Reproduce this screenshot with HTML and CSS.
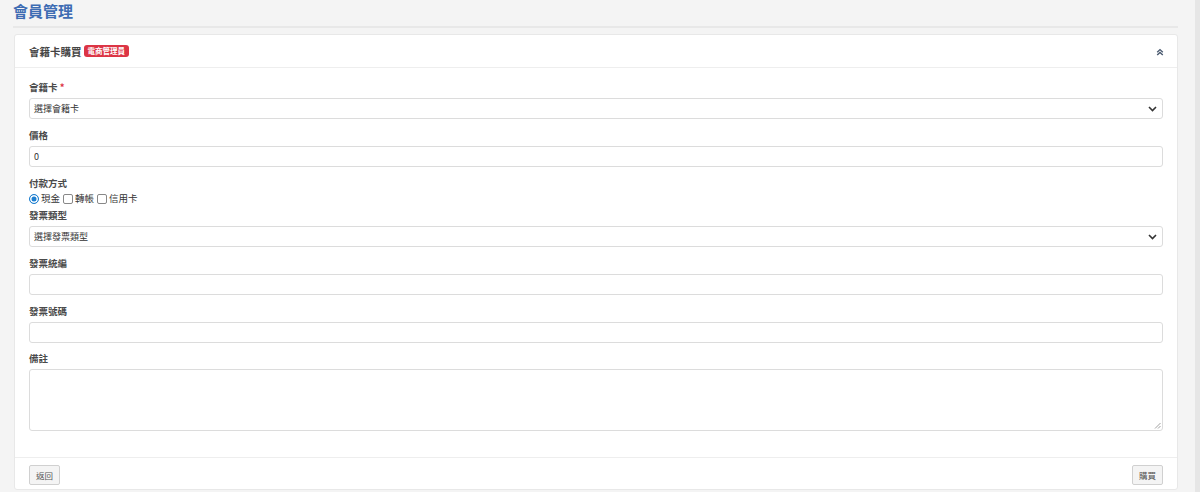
FILE: index.html
```html
<!DOCTYPE html>
<html lang="zh-Hant">
<head>
<meta charset="utf-8">
<title>會員管理</title>
<link rel="stylesheet" href="styles.css">
</head>
<body>
<div class="page">
  <div class="content">
    <h1 class="page-title">會員管理</h1>
    <div class="card">
      <div class="card-header">
        <div class="card-title">會籍卡購買<span class="badge">電商管理員</span></div>
        <svg class="collapse" width="8" height="8" viewBox="0 0 8 8"><path d="M1.2 4.2 L4 1.6 L6.8 4.2 M1.2 7 L4 4.4 L6.8 7" fill="none" stroke="#4a5a70" stroke-width="1.4"/></svg>
      </div>
      <div class="card-body">
        <div class="field">
          <label class="label">會籍卡 <span class="req">*</span></label>
          <div class="control select">選擇會籍卡<svg class="chev" width="9" height="6" viewBox="0 0 9 6"><path d="M1 1 L4.5 4.5 L8 1" fill="none" stroke="#333" stroke-width="1.6"/></svg></div>
        </div>
        <div class="field">
          <label class="label">價格</label>
          <div class="control">0</div>
        </div>
        <div class="field tight">
          <label class="label">付款方式</label>
          <div class="options">
            <span class="opt"><span class="radio"></span>現金</span>
            <span class="opt"><span class="check"></span>轉帳</span>
            <span class="opt"><span class="check"></span>信用卡</span>
          </div>
        </div>
        <div class="field">
          <label class="label">發票類型</label>
          <div class="control select">選擇發票類型<svg class="chev" width="9" height="6" viewBox="0 0 9 6"><path d="M1 1 L4.5 4.5 L8 1" fill="none" stroke="#333" stroke-width="1.6"/></svg></div>
        </div>
        <div class="field">
          <label class="label">發票統編</label>
          <div class="control"></div>
        </div>
        <div class="field snug">
          <label class="label">發票號碼</label>
          <div class="control"></div>
        </div>
        <div class="field last">
          <label class="label">備註</label>
          <div class="control textarea"><svg class="grip" width="7" height="7" viewBox="0 0 7 7"><path d="M6.5 1 L1 6.5 M6.5 4 L4 6.5" stroke="#888" stroke-width="0.8"/></svg></div>
        </div>
      </div>
      <div class="card-footer">
        <button class="btn">返回</button>
        <button class="btn">購買</button>
      </div>
    </div>
  </div>
  <div class="edge"></div>
</div>
</body>
</html>
```

FILE: styles.css
```css
* { box-sizing: border-box; }
html, body { margin: 0; padding: 0; }
body {
  background: #f4f4f4;
  font-family: "Noto Sans CJK TC", "Noto Sans", sans-serif;
  color: #444;
  height: 492px;
  overflow: hidden;
}
.page { display: flex; height: 492px; }
.content { flex: 1; padding: 0 17px 0 13px; }
.edge { width: 5px; background: #e6e6e6; }
.page-title {
  margin: 0;
  font-size: 15px;
  line-height: 22px;
  font-weight: 700;
  color: #3d6cb3;
  padding: 0 0 4px 0;
  border-bottom: 2px solid #e8e8e8;
}
.card {
  margin: 6px 0 0 1px;
  background: #fff;
  border: 1px solid #e8e8e8;
  border-radius: 3px;
}
.card-header {
  height: 33px;
  display: flex;
  align-items: center;
  justify-content: space-between;
  padding: 0 13px 0 14px;
  border-bottom: 1px solid #eeeeee;
}
.card-title {
  font-size: 10.5px;
  font-weight: 700;
  color: #444;
  display: flex;
  align-items: center;
}
.badge {
  margin-left: 2px;
  background: #dc3545;
  color: #fff;
  font-size: 7.5px;
  font-weight: 700;
  line-height: 12px;
  padding: 0 4px;
  border-radius: 3px;
}
.collapse { margin-top: 2px; }
.card-body { padding: 12px 14px 26px 14px; }
.field { margin-bottom: 9px; }
.field.snug { margin-bottom: 8px; }
.field.tight { margin-bottom: 3px; }
.field.last { margin-bottom: 0; }
.label {
  display: block;
  font-size: 9.5px;
  line-height: 14px;
  font-weight: 700;
  color: #4a4a4a;
  margin-bottom: 4px;
}
.req { color: #dc3545; }
.control {
  height: 21px;
  border: 1px solid #dcdcdc;
  border-radius: 3px;
  font-size: 9px;
  line-height: 19px;
  padding: 0 4px;
  color: #333;
  display: flex;
  align-items: center;
  justify-content: space-between;
}
.select .chev { margin-right: 1px; }
.textarea {
  height: 62px;
  align-items: flex-end;
  justify-content: flex-end;
  padding: 0 1px 1px 0;
}
.options {
  display: flex;
  gap: 3px;
  font-size: 9.5px;
  line-height: 13px;
  color: #333;
  margin-top: -2px;
}
.opt { display: flex; align-items: center; gap: 2px; }
.radio {
  width: 10px; height: 10px;
  border-radius: 50%;
  border: 1px solid #1e7fd0;
  box-shadow: inset 0 0 0 1.5px #fff;
  background: #1e7fd0;
}
.check {
  width: 10px; height: 10px;
  border: 1px solid #888;
  border-radius: 2px;
  background: #fff;
}
.card-footer {
  display: flex;
  justify-content: space-between;
  padding: 7px 14px 4px 14px;
  border-top: 1px solid #eeeeee;
}
.btn {
  font-family: "Noto Sans CJK TC", sans-serif;
  font-size: 8.5px;
  color: #555;
  background: #f4f4f4;
  border: 1px solid #d0d0d0;
  border-radius: 2px;
  height: 20px;
  padding: 0 6px;
  line-height: 18px;
}
```
